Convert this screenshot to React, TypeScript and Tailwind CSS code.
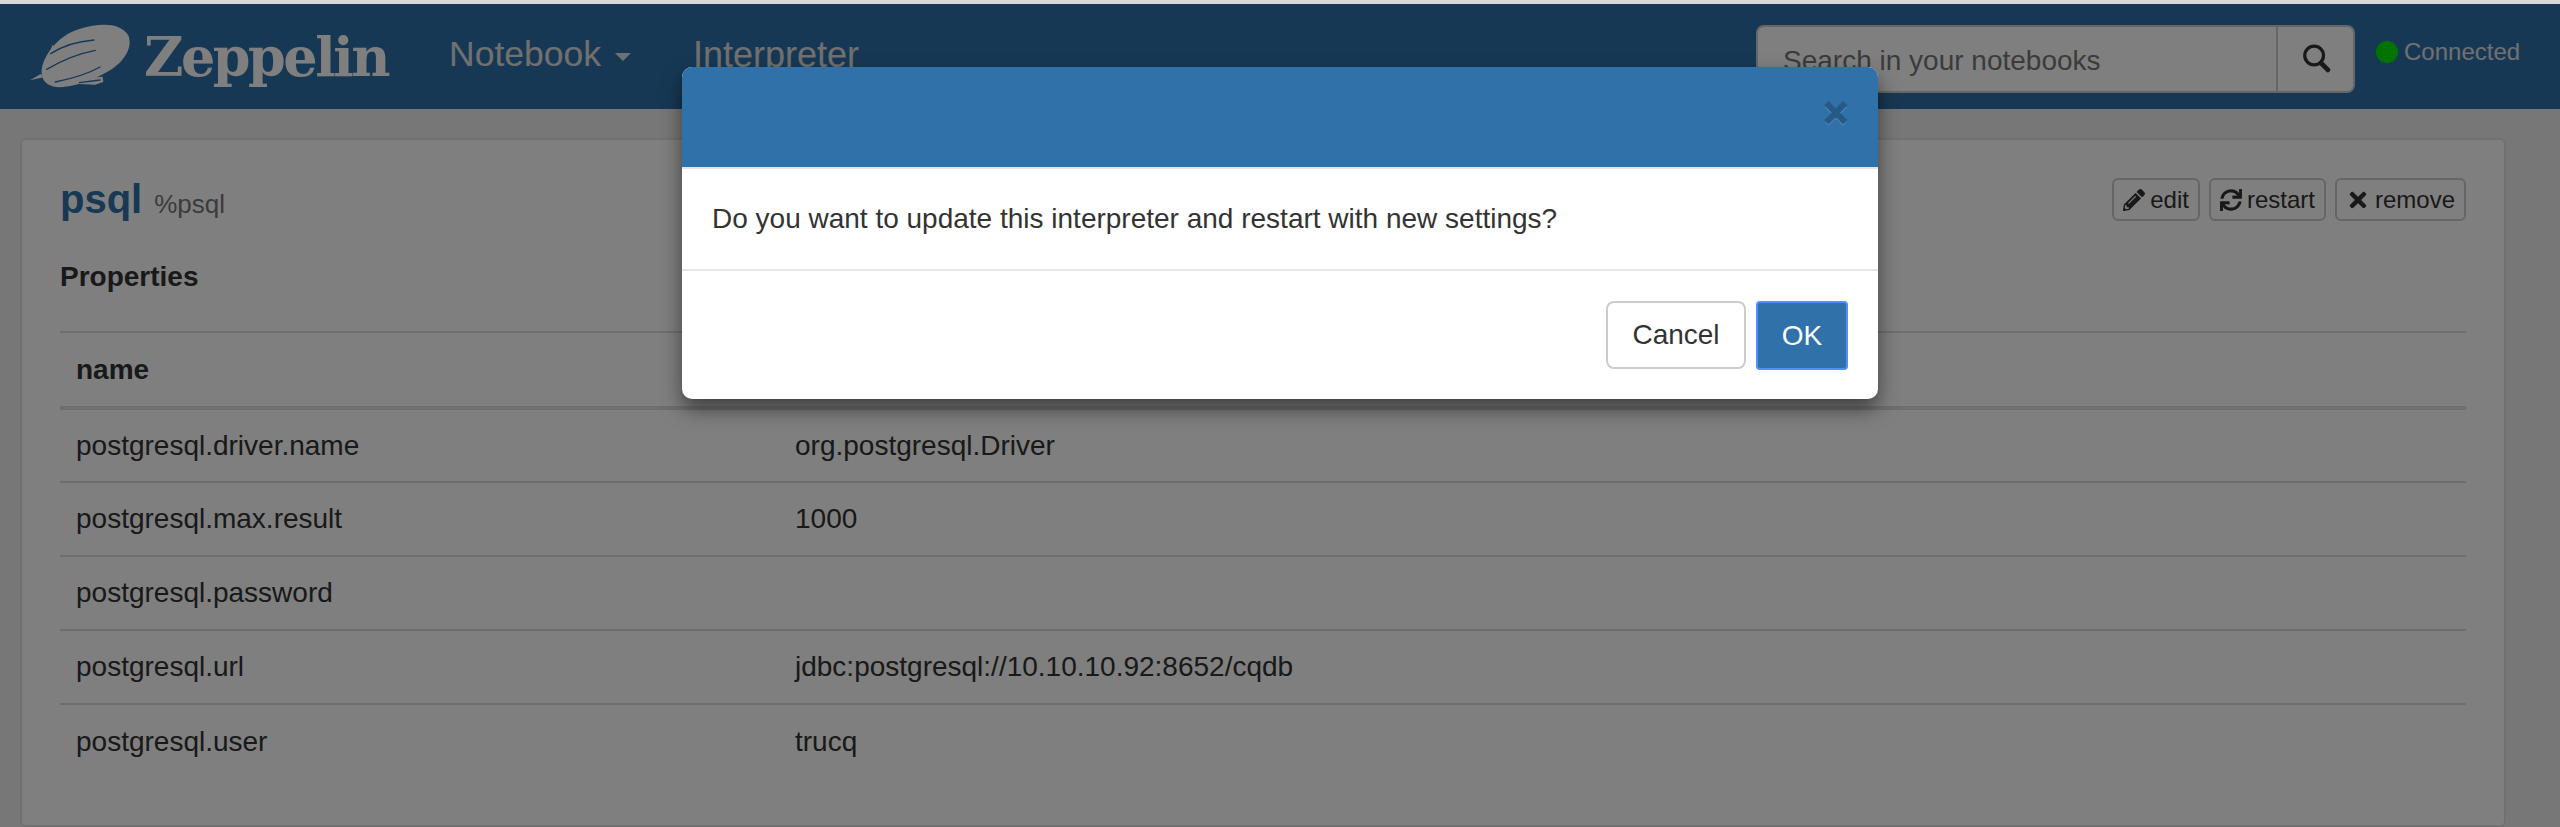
import { FaPencilAlt, FaSync, FaTimes } from "react-icons/fa";

const properties = [
  { name: "postgresql.driver.name", value: "org.postgresql.Driver" },
  { name: "postgresql.max.result", value: "1000" },
  { name: "postgresql.password", value: "" },
  { name: "postgresql.url", value: "jdbc:postgresql://10.10.10.92:8652/cqdb" },
  { name: "postgresql.user", value: "trucq" },
];

function Logo() {
  return (
    <svg viewBox="0 0 351 270" className="w-[117px] h-[90px] shrink-0" fill="#fff">
      <path d="M30 205 L62 186 L70 196 Z" />
      <path d="M90 118 L98 98 L106 108 Z" />
      <path d="M65 185 C62 140 110 70 180 50 C240 33 300 30 325 70 C340 110 310 150 270 175 C220 205 170 222 130 225 C95 228 68 215 65 185 Z" />
      <path d="M175 216 L205 198 L248 194 L250 210 L225 218 Z" />
      <g fill="none" stroke="#2f71a9" strokeWidth="4" strokeLinecap="round">
        <path d="M92 125 C130 100 175 88 222 84" />
        <path d="M80 172 C125 145 175 125 226 115" />
        <path d="M106 210 C155 200 205 185 240 165" />
        <path d="M178 212 L240 204" />
      </g>
    </svg>
  );
}

function SearchIcon() {
  return (
    <svg viewBox="0 0 24 24" className="w-[30px] h-[30px]" fill="none" stroke="#333">
      <circle cx="10.5" cy="10" r="7.5" strokeWidth="2.6" />
      <path d="M16 16 L21.5 21.5" strokeWidth="3.8" strokeLinecap="round" />
    </svg>
  );
}

function SmallButton({ icon, label }: { icon: React.ReactNode; label: string }) {
  return (
    <button className="h-[43px] px-[9px] flex items-center gap-[5px] bg-white border-2 border-[#ccc] rounded-[6px] text-[24px] text-[#333]">
      {icon}
      {label}
    </button>
  );
}

export default function App() {
  return (
    <div className="relative h-[827px] overflow-hidden flex flex-col bg-[#eee] font-['Liberation_Sans',sans-serif] text-[28px] text-[#333]">
      <nav className="h-[105px] mt-[4px] shrink-0 flex items-center bg-[#2f71a9]">
        <div className="ml-[20px] flex items-center gap-[7px] text-[#fff]">
          <Logo />
          <span className="w-[244px] font-['DejaVu_Serif',serif] font-bold text-[54px] tracking-[-2.5px] leading-none">
            Zeppelin
          </span>
        </div>
        <a className="ml-[61px] mt-[-3px] flex items-center text-[35.5px] text-[#e0e0e0]">
          Notebook
          <span className="ml-[14px] mt-[4px] border-x-[8px] border-x-transparent border-t-[8px] border-t-[#e0e0e0]" />
        </a>
        <a className="ml-[62px] mt-[-3px] text-[36px] text-[#e0e0e0]">Interpreter</a>
        <div className="ml-auto flex h-[68px] w-[599px] mt-[5px] bg-white border-2 border-[#ccc] rounded-[8px]">
          <span className="flex-1 pl-[25px] flex items-center pt-[4px] text-[28px] text-[#777]">
            Search in your notebooks
          </span>
          <span className="w-[77px] pb-[2px] border-l-2 border-[#ccc] flex items-center justify-center">
            <SearchIcon />
          </span>
        </div>
        <div className="ml-[21px] mr-[40px] mt-[-10px] w-[144px] flex items-center gap-[6px] text-[24px] text-[#e0e0e0]">
          <span className="w-[22px] h-[22px] rounded-full bg-[#00e600] shrink-0" />
          Connected
        </div>
      </nav>

      <main className="flex-1 pt-[29px] pl-[20px] pr-[54px]">
        <section className="h-full pt-[36px] px-[38px] bg-white border-2 border-[#e3e3e3] rounded-[6px]">
          <div className="flex items-center justify-between h-[48px]">
            <h2 className="mt-[2px] flex items-baseline gap-[12px]">
              <span className="text-[40px] font-bold text-[#3071a9] leading-none">psql</span>
              <span className="text-[26px] text-[#777]">%psql</span>
            </h2>
            <div className="mb-[1px] flex gap-[9px]">
              <SmallButton icon={<FaPencilAlt className="text-[22px]" />} label="edit" />
              <SmallButton icon={<FaSync className="text-[22px]" />} label="restart" />
              <SmallButton icon={<FaTimes className="text-[24px]" />} label="remove" />
            </div>
          </div>
          <h3 className="mt-[32px] font-bold">Properties</h3>
          <table className="mt-[33px] w-full border-t-2 border-[#ddd] border-collapse">
            <thead>
              <tr className="h-[76px] border-b-[4px] border-[#ddd] text-left">
                <th className="w-[719px] pl-[16px] font-bold">name</th>
                <th className="pl-[16px] font-bold">value</th>
              </tr>
            </thead>
            <tbody>
              {properties.map((p) => (
                <tr key={p.name} className="h-[74px] border-b-2 border-[#ddd] last:border-b-0">
                  <td className="pl-[16px]">{p.name}</td>
                  <td className="pl-[16px]">{p.value}</td>
                </tr>
              ))}
            </tbody>
          </table>
        </section>
      </main>

      {/* top strip + backdrop */}
      <div className="absolute inset-x-0 top-0 h-[4px] bg-[#d8d8d8]" />
      <div className="absolute inset-x-0 top-[4px] bottom-0 bg-black/50" />

      {/* modal */}
      <div className="absolute left-[682px] top-[67px] w-[1196px] h-[332px] flex flex-col bg-white rounded-[10px] overflow-hidden shadow-[0_10px_20px_rgba(0,0,0,0.5)]">
        <div className="h-[102px] shrink-0 flex items-center justify-end pr-[30px] pb-[8px] bg-[#3071a9] border-b-2 border-[#e5e5e5]">
          <span className="font-bold text-[42px] leading-none text-black opacity-20 [-webkit-text-stroke:1.5px_black] [text-shadow:0_2px_0_#fff]">
            ×
          </span>
        </div>
        <div className="h-[102px] shrink-0 flex items-center pl-[30px] border-b-2 border-[#e5e5e5]">
          Do you want to update this interpreter and restart with new settings?
        </div>
        <div className="flex-1 flex items-start justify-end gap-[10px] pt-[30px] pr-[30px]">
          <button className="h-[68px] w-[140px] bg-white border-2 border-[#ccc] rounded-[8px] text-[#333]">
            Cancel
          </button>
          <button className="h-[69px] w-[92px] bg-[#3071a9] border-2 border-[#4d90fe] rounded-[4px] text-white">
            OK
          </button>
        </div>
      </div>
    </div>
  );
}
